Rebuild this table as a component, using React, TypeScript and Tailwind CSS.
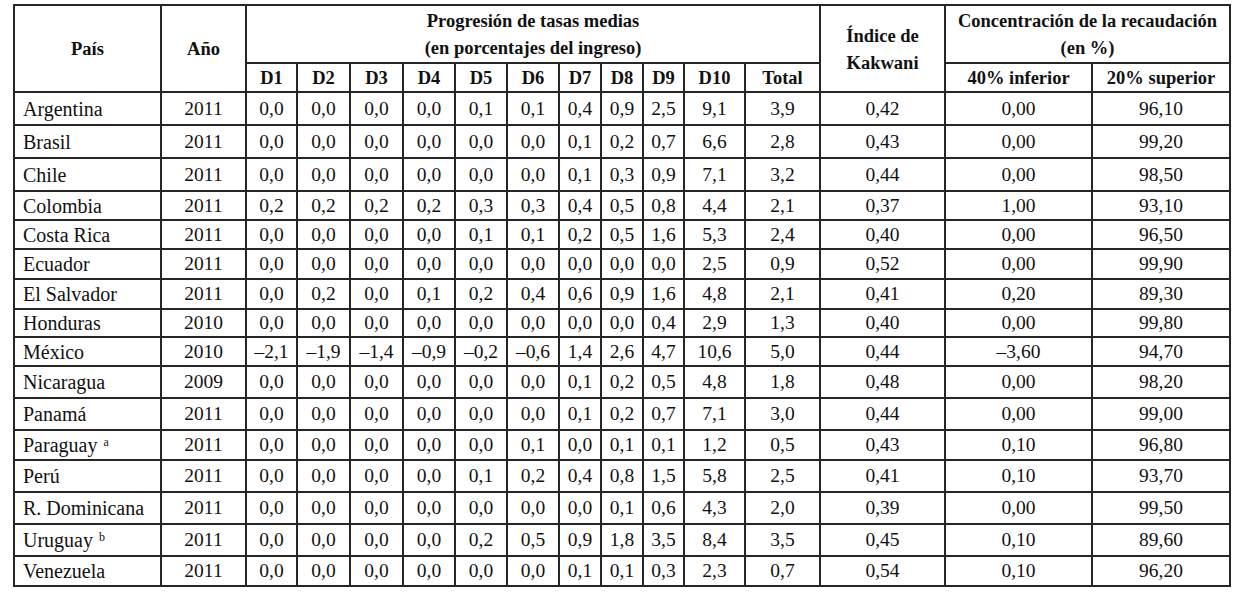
import React from "react";

type Row = { pais: string; sup?: string; anio: string; d: string[]; k: string; c40: string; c20: string; h: number };

const rows: Row[] = [
  { pais: "Argentina", anio: "2011", d: ["0,0","0,0","0,0","0,0","0,1","0,1","0,4","0,9","2,5","9,1","3,9"], k: "0,42", c40: "0,00", c20: "96,10", h: 33 },
  { pais: "Brasil", anio: "2011", d: ["0,0","0,0","0,0","0,0","0,0","0,0","0,1","0,2","0,7","6,6","2,8"], k: "0,43", c40: "0,00", c20: "99,20", h: 33 },
  { pais: "Chile", anio: "2011", d: ["0,0","0,0","0,0","0,0","0,0","0,0","0,1","0,3","0,9","7,1","3,2"], k: "0,44", c40: "0,00", c20: "98,50", h: 33 },
  { pais: "Colombia", anio: "2011", d: ["0,2","0,2","0,2","0,2","0,3","0,3","0,4","0,5","0,8","4,4","2,1"], k: "0,37", c40: "1,00", c20: "93,10", h: 29 },
  { pais: "Costa Rica", anio: "2011", d: ["0,0","0,0","0,0","0,0","0,1","0,1","0,2","0,5","1,6","5,3","2,4"], k: "0,40", c40: "0,00", c20: "96,50", h: 29 },
  { pais: "Ecuador", anio: "2011", d: ["0,0","0,0","0,0","0,0","0,0","0,0","0,0","0,0","0,0","2,5","0,9"], k: "0,52", c40: "0,00", c20: "99,90", h: 30 },
  { pais: "El Salvador", anio: "2011", d: ["0,0","0,2","0,0","0,1","0,2","0,4","0,6","0,9","1,6","4,8","2,1"], k: "0,41", c40: "0,20", c20: "89,30", h: 30 },
  { pais: "Honduras", anio: "2010", d: ["0,0","0,0","0,0","0,0","0,0","0,0","0,0","0,0","0,4","2,9","1,3"], k: "0,40", c40: "0,00", c20: "99,80", h: 28 },
  { pais: "México", anio: "2010", d: ["–2,1","–1,9","–1,4","–0,9","–0,2","–0,6","1,4","2,6","4,7","10,6","5,0"], k: "0,44", c40: "–3,60", c20: "94,70", h: 29 },
  { pais: "Nicaragua", anio: "2009", d: ["0,0","0,0","0,0","0,0","0,0","0,0","0,1","0,2","0,5","4,8","1,8"], k: "0,48", c40: "0,00", c20: "98,20", h: 32 },
  { pais: "Panamá", anio: "2011", d: ["0,0","0,0","0,0","0,0","0,0","0,0","0,1","0,2","0,7","7,1","3,0"], k: "0,44", c40: "0,00", c20: "99,00", h: 32 },
  { pais: "Paraguay", sup: "a", anio: "2011", d: ["0,0","0,0","0,0","0,0","0,0","0,1","0,0","0,1","0,1","1,2","0,5"], k: "0,43", c40: "0,10", c20: "96,80", h: 30 },
  { pais: "Perú", anio: "2011", d: ["0,0","0,0","0,0","0,0","0,1","0,2","0,4","0,8","1,5","5,8","2,5"], k: "0,41", c40: "0,10", c20: "93,70", h: 32 },
  { pais: "R. Dominicana", anio: "2011", d: ["0,0","0,0","0,0","0,0","0,0","0,0","0,0","0,1","0,6","4,3","2,0"], k: "0,39", c40: "0,00", c20: "99,50", h: 32 },
  { pais: "Uruguay", sup: "b", anio: "2011", d: ["0,0","0,0","0,0","0,0","0,2","0,5","0,9","1,8","3,5","8,4","3,5"], k: "0,45", c40: "0,10", c20: "89,60", h: 32 },
  { pais: "Venezuela", anio: "2011", d: ["0,0","0,0","0,0","0,0","0,0","0,0","0,1","0,1","0,3","2,3","0,7"], k: "0,54", c40: "0,10", c20: "96,20", h: 30 },
];

const widths = [147, 85, 51, 53, 53, 52, 52, 52, 42, 42, 41, 61, 75, 125, 147, 138];
const decs = ["D1","D2","D3","D4","D5","D6","D7","D8","D9","D10","Total"];

const base = "border-2 border-[#262626] p-0 text-center whitespace-nowrap font-['Liberation_Serif','Times_New_Roman',serif]";
const cell = base + " align-middle";
const bodyCell = cell;

export default function App() {
  return (
    <div className="bg-white w-[1242px] h-[592px] pt-[4px] pl-[13px] text-[#111111] font-['Liberation_Serif','Times_New_Roman',serif]">
      <table className="table-fixed border-collapse w-[1218px] text-[19.5px] leading-[22px] font-['Liberation_Serif','Times_New_Roman',serif]">
        <colgroup>
          {widths.map((w, i) => (
            <col key={i} style={{ width: w }} />
          ))}
        </colgroup>
        <thead className="font-bold text-[18.5px] leading-[27px]">
          <tr style={{ height: 56 }}>
            <th rowSpan={2} className={cell + " font-bold pt-[2px]"}>País</th>
            <th rowSpan={2} className={cell + " font-bold pt-[2px]"}>Año</th>
            <th colSpan={11} className={base + " align-top font-bold pt-[2px]"}>
              <div>Progresión de tasas medias</div>
              <div>(en porcentajes del ingreso)</div>
            </th>
            <th rowSpan={2} className={cell + " font-bold pt-[2px]"}>
              <div>Índice de</div>
              <div>Kakwani</div>
            </th>
            <th colSpan={2} className={base + " align-top font-bold pt-[2px]"}>
              <div>Concentración de la recaudación</div>
              <div>(en %)</div>
            </th>
          </tr>
          <tr style={{ height: 29 }}>
            {decs.map((d) => (
              <th key={d} className={cell + " font-bold leading-[22px]"}>{d}</th>
            ))}
            <th className={cell + " font-bold leading-[22px]"}>40% inferior</th>
            <th className={cell + " font-bold leading-[22px]"}>20% superior</th>
          </tr>
        </thead>
        <tbody>
          {rows.map((r) => (
            <tr key={r.pais} style={{ height: r.h }}>
              <td className={bodyCell + " text-left pl-[8px] text-[20px]"}>
                {r.pais}
                {r.sup && <span className="ml-[6px] text-[12px] align-[6px] leading-none">{r.sup}</span>}
              </td>
              <td className={bodyCell}>{r.anio}</td>
              {r.d.map((v, i) => (
                <td key={i} className={bodyCell}>{v}</td>
              ))}
              <td className={bodyCell}>{r.k}</td>
              <td className={bodyCell}>{r.c40}</td>
              <td className={bodyCell}>{r.c20}</td>
            </tr>
          ))}
        </tbody>
      </table>
    </div>
  );
}
